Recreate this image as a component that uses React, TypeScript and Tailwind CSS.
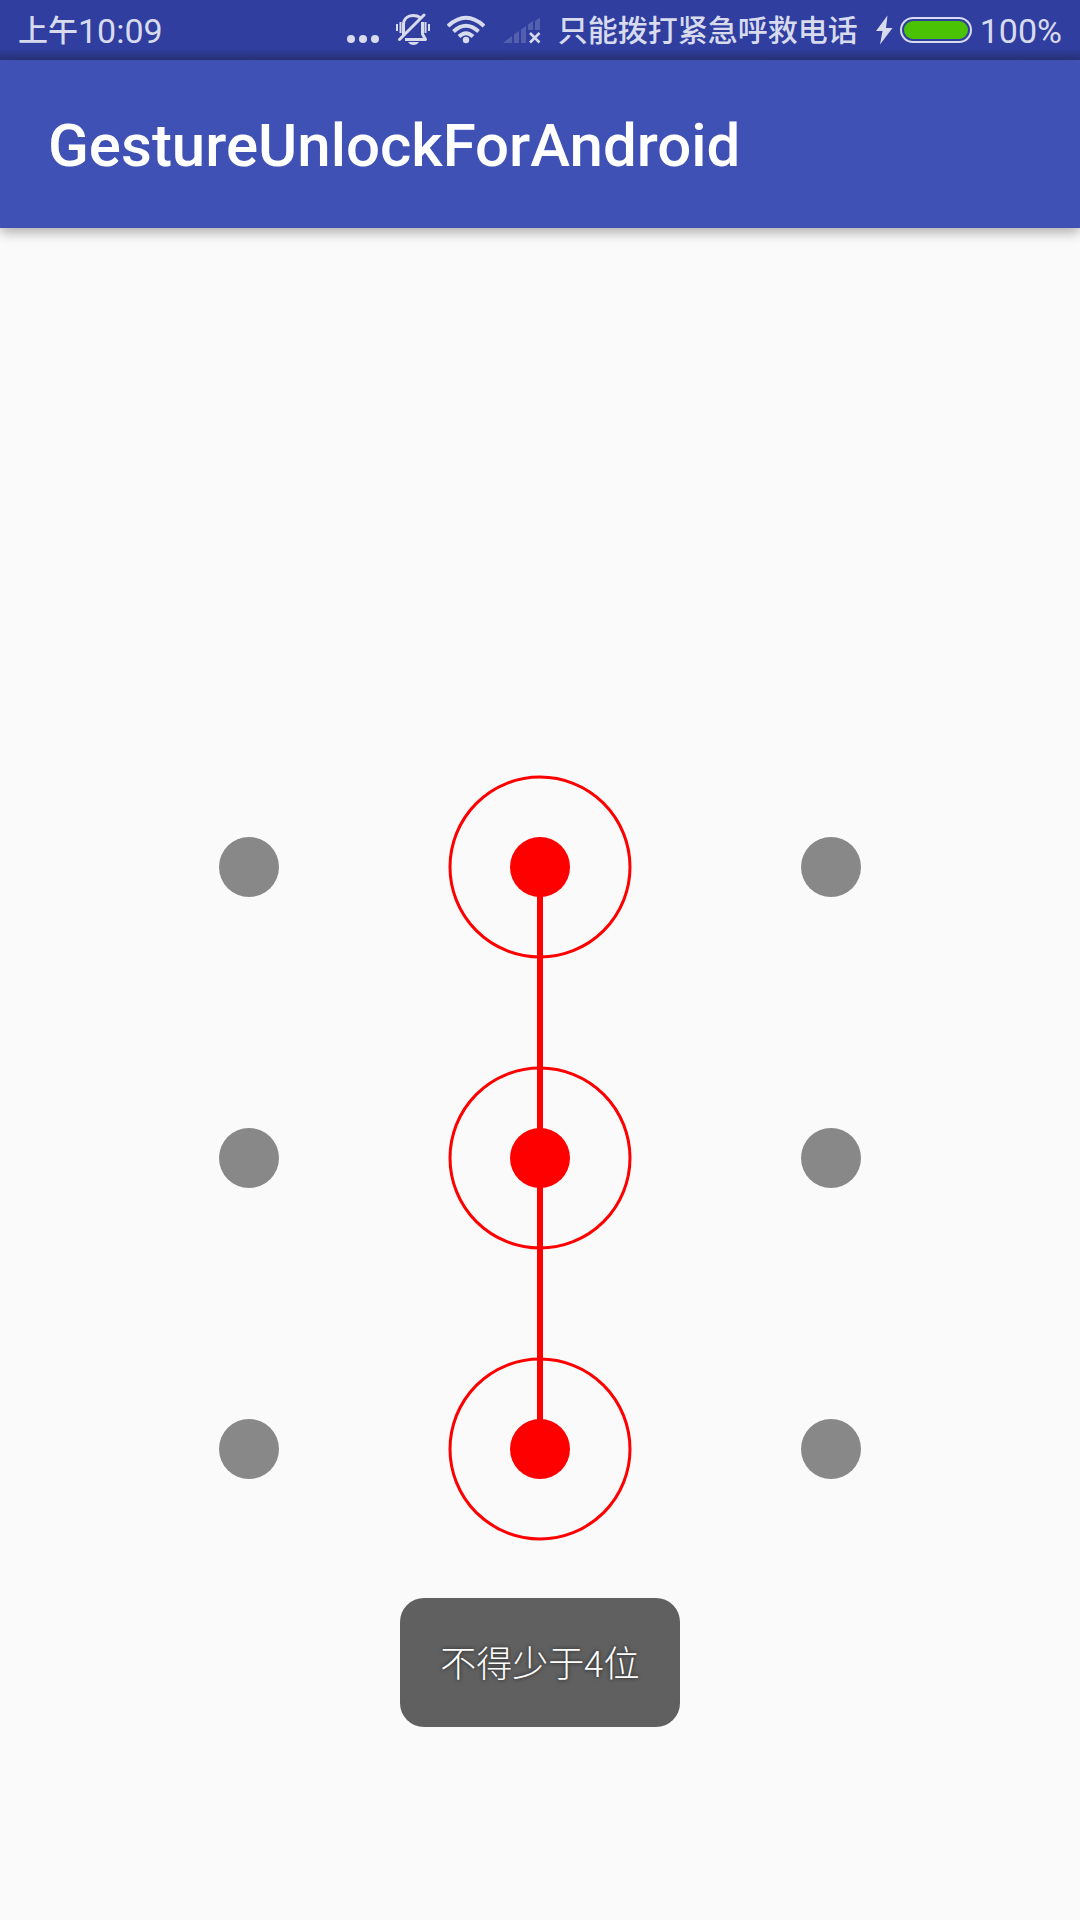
const CENTERS = [92, 383, 674];

function StatusBar() {
  return (
    <div className="flex h-[60px] items-center bg-linear-to-b from-[#303f9f] from-80% to-[#28347f] px-[18px] text-[#d8dbee]">
      <div className="flex items-center pt-0.5">
        <span className="text-[30px] font-medium leading-none">上午</span>
        <span className="text-[34px] leading-none">10:09</span>
      </div>
      <div className="ml-auto flex items-center">
        <svg className="mr-4 h-[60px] w-8" viewBox="0 0 32 60" fill="currentColor" aria-hidden="true">
          <circle cx="4" cy="39" r="4" />
          <circle cx="16" cy="39" r="4" />
          <circle cx="28" cy="39" r="4" />
        </svg>
        <svg className="mr-4 h-[60px] w-9" viewBox="395 0 36 60" fill="none" stroke="currentColor" aria-label="静音">
          <path d="M403.500 35V25C403.500 18.500 408 15.500 413 15.500C415.500 15.500 418 16 420 17.500" strokeWidth="3" />
          <path d="M422.500 22V34L425.500 39.500H405" strokeWidth="3" strokeLinejoin="round" />
          <path d="M399.500 39.500L424 15" strokeWidth="3" strokeLinecap="round" />
          <path d="M397 24V31M400.500 22V33M425.500 22V33M429 24V31" strokeWidth="2" />
          <path d="M408 42H419C417.500 44 416 45 413.500 45S409.500 44 408 42Z" fill="currentColor" stroke="none" />
        </svg>
        <svg className="mr-[18px] h-[60px] w-[38px]" viewBox="447 0 38 60" fill="none" stroke="currentColor" strokeWidth="4" aria-label="Wi-Fi">
          <path d="M448 26Q466 9.500 484 26" />
          <path d="M453.500 31.500Q466 20 478.500 31.500" />
          <path d="M459 36.500Q466 30 473 36.500" />
          <circle cx="466" cy="40" r="3.200" fill="currentColor" stroke="none" />
        </svg>
        <svg className="mr-[17px] h-[60px] w-[38px]" viewBox="503 0 38 60" aria-label="无信号">
          <path d="M503 43L512 36V43ZM514 43V34.500L519 31V43ZM521 43V29.500L526 26V43ZM528 30V24.500L533 21V30ZM535 30V21L540 17.500V30Z" fill="#5360b0" />
          <path d="M530 33L539.500 42.500M539.500 33L530 42.500" stroke="currentColor" strokeWidth="2.500" />
        </svg>
        <span className="pt-0.5 text-[30px] font-medium leading-none">只能拨打紧急呼救电话</span>
        <svg className="ml-[17px] h-[60px] w-[98px]" viewBox="875 0 98 60" aria-label="正在充电">
          <path d="M887.500 15.500L876 31H882.500L880 44.500L892.500 28H886Z" fill="currentColor" />
          <rect x="901" y="18" width="70" height="24" rx="12" fill="none" stroke="currentColor" strokeWidth="2" />
          <rect x="904" y="21" width="64" height="18" rx="9" fill="#49c304" />
        </svg>
        <span className="ml-[7px] pt-0.5 text-[34px] leading-none">100%</span>
      </div>
    </div>
  );
}

function GesturePattern() {
  return (
    <svg className="h-auto w-[766px] max-w-full" viewBox="0 0 766 766" role="img" aria-label="手势解锁">
      <path d="M383 92V674" stroke="#ff0000" strokeWidth="6" />
      {CENTERS.map((cy) =>
        CENTERS.map((cx) =>
          cx === 383 ? (
            <g key={`${cx}-${cy}`}>
              <circle cx={cx} cy={cy} r="90" fill="none" stroke="#ff0000" strokeWidth="3" />
              <circle cx={cx} cy={cy} r="30" fill="#ff0000" />
            </g>
          ) : (
            <circle key={`${cx}-${cy}`} cx={cx} cy={cy} r="30" fill="#888888" />
          ),
        ),
      )}
    </svg>
  );
}

export default function App() {
  return (
    <div className="flex min-h-screen flex-col bg-[#fafafa] font-['Roboto','Noto_Sans_CJK_SC',sans-serif]">
      <StatusBar />
      <header className="flex h-[168px] items-center bg-[#3f51b5] px-12 pt-1 shadow-[0_4px_12px_rgba(0,0,0,0.33)]">
        <h1 className="text-[60px] font-medium leading-none text-white">GestureUnlockForAndroid</h1>
      </header>
      <main className="flex flex-1 flex-col items-center pt-[547px]">
        <GesturePattern />
        <div
          role="status"
          className="mt-[57px] flex h-[129px] items-center rounded-[24px] bg-[#606060] px-10 pb-1 font-['Noto_Sans_CJK_SC',sans-serif] text-[36px] leading-none font-light text-white text-shadow-[0_0_4px_rgba(0,0,0,0.7)]"
        >
          不得少于4位
        </div>
      </main>
    </div>
  );
}
